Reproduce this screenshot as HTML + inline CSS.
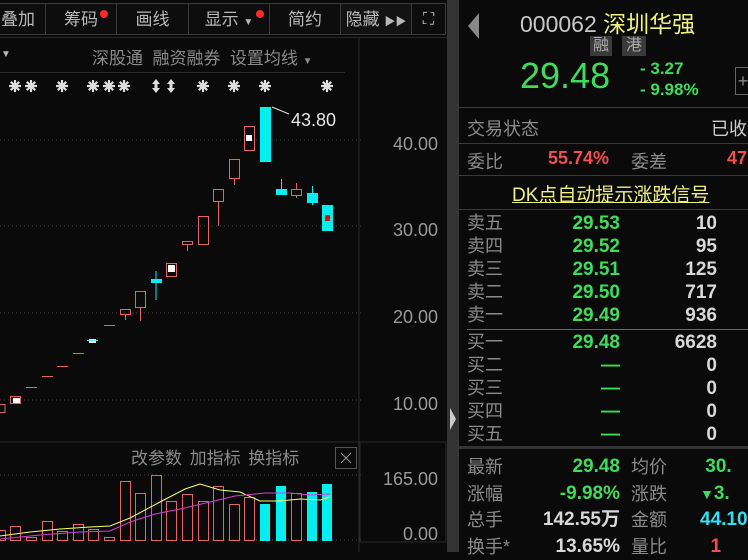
<!DOCTYPE html>
<html><head><meta charset="utf-8"><style>
body{margin:0;width:748px;height:552px;background:#0a0a0a;overflow:hidden;position:relative;font-family:"Liberation Sans","Noto Sans CJK SC",sans-serif;}
.a{position:absolute;white-space:nowrap;}
.tb{position:absolute;top:3px;height:32px;border:1px solid #3a3a3a;background:#0d0d0d;color:#b8b8b8;font-size:17px;line-height:32px;text-align:center;box-sizing:border-box;}
.dot{position:absolute;width:8px;height:8px;border-radius:50%;background:#ff2a2a;}
.hl{position:absolute;left:459px;width:289px;height:1px;background:#3a3a3a;}
.lb{color:#8a8a8a;font-size:18px;}
.g{color:#3ddc5a;font-weight:bold;font-size:19px;}
.w{color:#d8d8d8;font-weight:bold;font-size:19px;}
</style></head><body>
<div class="tb" style="left:-2px;width:48px;text-align:left;padding-left:2px">叠加 <span style="font-size:10px">▼</span></div>
<div class="tb" style="left:45px;width:72px">筹码</div><div class="dot" style="left:100px;top:10px"></div>
<div class="tb" style="left:116px;width:73px">画线</div>
<div class="tb" style="left:188px;width:82px">显示 <span style="font-size:10px">▼</span></div><div class="dot" style="left:256px;top:10px"></div>
<div class="tb" style="left:269px;width:72px">简约</div>
<div class="tb" style="left:340px;width:72px;background:#121212">隐藏 <span style="font-size:11px">▶▶</span></div>
<div class="tb" style="left:411px;width:35px;font-size:16px">⛶</div>
<div class="a" style="left:0;top:37px;width:447px;height:1px;background:#2a2a2a"></div>
<div class="a" style="left:92px;top:44px;color:#8a8a8a;font-size:17px">深股通&nbsp;&nbsp;融资融券&nbsp;&nbsp;设置均线 <span style="font-size:10px">▼</span></div>
<div class="a" style="left:0;top:72px;width:345px;height:1px;background:#2a2a2a"></div>
<svg class="a" style="left:0;top:0" width="459" height="552">
<defs><g id="st" stroke="#ddd" stroke-width="2.2"><line x1="-6" y1="0" x2="6" y2="0"/><line x1="0" y1="-6" x2="0" y2="6"/><line x1="-4.2" y1="-4.2" x2="4.2" y2="4.2"/><line x1="-4.2" y1="4.2" x2="4.2" y2="-4.2"/><circle r="3" fill="#ddd" stroke="none"/></g>
<g id="ar" fill="#ddd"><polygon points="0,-7 -4,-2 4,-2"/><polygon points="0,7 -4,2 4,2"/><rect x="-1.5" y="-3" width="3" height="6"/></g></defs>
<use href="#st" x="15" y="86"/><use href="#st" x="31" y="86"/><use href="#st" x="62" y="86"/><use href="#st" x="93" y="86"/><use href="#st" x="109" y="86"/><use href="#st" x="124" y="86"/>
<use href="#ar" x="156" y="86"/><use href="#ar" x="171" y="86"/><use href="#st" x="203" y="86"/><use href="#st" x="234" y="86"/><use href="#st" x="265" y="86"/><use href="#st" x="327" y="86"/>
<line x1="359" y1="38" x2="359" y2="552" stroke="#2a2a2a"/>
<g stroke="#444" stroke-dasharray="1,3">
<line x1="0" y1="140" x2="362" y2="140"/><line x1="0" y1="226" x2="362" y2="226"/><line x1="0" y1="313" x2="362" y2="313"/><line x1="0" y1="400" x2="362" y2="400"/><line x1="0" y1="475" x2="362" y2="475"/><line x1="0" y1="540" x2="362" y2="540"/>
</g>
<rect x="360" y="442" width="86" height="100" fill="none" stroke="#2a2a2a"/>
<line x1="0" y1="442" x2="360" y2="442" stroke="#2a2a2a"/>
<rect x="447" y="0" width="11" height="552" fill="#333"/>
<polygon points="450,408 456,419 450,430" fill="#ccc"/>
<g fill="none" stroke="#e06666" stroke-width="1">
<rect x="-1" y="404.5" width="6" height="8"/><rect x="10.5" y="396.5" width="10" height="7"/>
<line x1="26" y1="387.5" x2="37" y2="387.5"/><line x1="42" y1="376.5" x2="53" y2="376.5"/><line x1="57" y1="366.5" x2="68" y2="366.5"/><line x1="73" y1="353.5" x2="84" y2="353.5"/><line x1="104" y1="325.5" x2="115" y2="325.5"/>
<rect x="120.5" y="309.5" width="10" height="5"/><line x1="125.5" y1="314" x2="125.5" y2="320"/>
<rect x="135.5" y="291.5" width="10" height="16"/><line x1="140.5" y1="308" x2="140.5" y2="321"/>
<rect x="166.5" y="263.5" width="10" height="13"/>
<rect x="182.5" y="241.5" width="10" height="3"/><line x1="187.5" y1="245" x2="187.5" y2="251"/>
<rect x="198.5" y="216.5" width="10" height="28"/>
<rect x="213.5" y="189.5" width="10" height="12"/><line x1="218.5" y1="202" x2="218.5" y2="226"/>
<rect x="229.5" y="159.5" width="10" height="19"/><line x1="234.5" y1="179" x2="234.5" y2="185"/>
<rect x="244.5" y="126.5" width="10" height="24"/>
<rect x="291.5" y="189.5" width="10" height="6"/><line x1="296.5" y1="183" x2="296.5" y2="189"/><line x1="296.5" y1="196" x2="296.5" y2="198"/>
</g>
<rect x="13" y="398" width="7" height="5" fill="#fff"/><rect x="89" y="339" width="7" height="4" fill="#fff"/><line x1="87" y1="340.5" x2="98" y2="340.5" stroke="#6ee"/>
<rect x="168" y="265" width="7" height="7" fill="#fff"/><rect x="246" y="135" width="6" height="6" fill="#fff"/>
<g fill="#00f0f0"><rect x="151" y="279" width="11" height="4"/><rect x="155.5" y="271" width="1" height="29"/>
<rect x="260" y="107" width="11" height="55"/><rect x="276" y="189" width="11" height="6"/><rect x="281" y="179" width="1" height="10"/>
<rect x="307" y="193" width="11" height="10"/><rect x="312" y="186" width="1" height="19"/><rect x="322" y="205" width="11" height="26"/></g>
<rect x="325" y="215" width="5" height="6" fill="#e00"/>
<line x1="272" y1="107" x2="289" y2="114" stroke="#ddd"/>
<text x="291" y="126" fill="#e6e6e6" font-size="18" font-family="Liberation Sans">43.80</text>
<g fill="#999" font-size="18" font-family="Liberation Sans" text-anchor="end">
<text x="438" y="150">40.00</text><text x="438" y="236">30.00</text><text x="438" y="323">20.00</text><text x="438" y="410">10.00</text><text x="438" y="485">165.00</text><text x="438" y="540">0.00</text></g>
<text x="131" y="464" fill="#8a8a8a" font-size="17" font-family="Noto Sans CJK SC">改参数&#160;&#160;加指标&#160;&#160;换指标</text>
<rect x="335.5" y="447.5" width="21" height="21" fill="none" stroke="#555"/>
<path d="M341 453L351 463M351 453L341 463" stroke="#999"/>
<g fill="none" stroke="#e06666">
<rect x="-2.5" y="530.5" width="8" height="10"/><rect x="10.5" y="526.5" width="10" height="14"/><rect x="26.5" y="537.5" width="10" height="3"/><rect x="42.5" y="521.5" width="10" height="19"/><rect x="57.5" y="531.5" width="10" height="9"/><rect x="73.5" y="524.5" width="10" height="16"/><rect x="88.5" y="529.5" width="10" height="11"/><rect x="104.5" y="537.5" width="10" height="3"/><rect x="120.5" y="481.5" width="10" height="59"/><rect x="135.5" y="493.5" width="10" height="47"/><rect x="151.5" y="475.5" width="10" height="65"/><rect x="166.5" y="501.5" width="10" height="39"/><rect x="182.5" y="494.5" width="10" height="46"/><rect x="198.5" y="501.5" width="10" height="39"/><rect x="213.5" y="486.5" width="10" height="54"/><rect x="229.5" y="504.5" width="10" height="36"/><rect x="244.5" y="497.5" width="10" height="43"/><rect x="291.5" y="493.5" width="10" height="47"/></g>
<g fill="#00f0f0"><rect x="260" y="504" width="10" height="37"/><rect x="276" y="486" width="10" height="55"/><rect x="307" y="492" width="10" height="49"/><rect x="322" y="484" width="10" height="57"/></g>
<polyline fill="none" stroke="#ffff66" points="0,536 30,532 60,529 90,527 110,526 130,518 160,502 185,489 200,484 220,490 240,492 260,501 280,501 300,499 320,500 330,497"/>
<polyline fill="none" stroke="#d040d0" points="0,539 40,535 80,532 110,531 130,522 155,514 180,509 210,502 235,496 265,493 290,493 310,495 330,494"/>
</svg>
<div class="a" style="left:458px;top:0;width:1px;height:552px;background:#3a3a3a"></div>
<svg class="a" style="left:466px;top:12px" width="16" height="28"><polygon points="13,1 13,27 2,14" fill="#888"/></svg>
<div class="a" style="left:520px;top:5px;font-size:23px;color:#c8c8c8">000062 <span style="color:#f0f080;font-family:'Noto Sans CJK SC'">深圳华强</span></div>
<div class="a" style="left:590px;top:36px;width:22px;height:20px;background:#3a3a3a;color:#aaa;font-size:16px;text-align:center;line-height:20px">融</div>
<div class="a" style="left:622px;top:36px;width:24px;height:20px;background:#3a3a3a;color:#aaa;font-size:16px;text-align:center;line-height:20px">港</div>
<div class="a" style="left:520px;top:55px;font-size:36px;color:#3ddc5a">29.48</div>
<div class="a" style="left:640px;top:58px;font-size:17px;color:#3ddc5a;font-weight:bold;line-height:21px">- 3.27<br>- 9.98%</div>
<div class="a" style="left:735px;top:67px;width:14px;height:26px;border:1px solid #666;color:#888;font-size:18px;line-height:26px;text-align:center">+</div>
<div class="hl" style="top:107px"></div>
<div class="a lb" style="left:467px;top:115px">交易状态</div><div class="a" style="left:711px;top:115px;color:#ccc;font-size:18px">已收</div>
<div class="hl" style="top:143px"></div>
<div class="a lb" style="left:467px;top:148px">委比</div><div class="a" style="left:548px;top:148px;color:#f05050;font-weight:bold;font-size:18px">55.74%</div>
<div class="a lb" style="left:631px;top:148px">委差</div><div class="a" style="left:727px;top:148px;color:#f05050;font-weight:bold;font-size:18px">47</div>
<div class="hl" style="top:175px"></div>
<div class="a" style="left:512px;top:180px;color:#f0f080;font-size:19px;text-decoration:underline">DK点自动提示涨跌信号</div>
<div class="hl" style="top:209px"></div>
<div class="a" style="left:467px;top:212px;line-height:23px">
<div class="lb">卖五</div><div class="lb">卖四</div><div class="lb">卖三</div><div class="lb">卖二</div><div class="lb">卖一</div>
<div style="height:4px"></div>
<div class="lb">买一</div><div class="lb">买二</div><div class="lb">买三</div><div class="lb">买四</div><div class="lb">买五</div></div>
<div class="a" style="left:520px;width:100px;top:212px;line-height:23px;text-align:right">
<div class="g">29.53</div><div class="g">29.52</div><div class="g">29.51</div><div class="g">29.50</div><div class="g">29.49</div><div style="height:4px"></div><div class="g">29.48</div><div class="g">—</div><div class="g">—</div><div class="g">—</div><div class="g">—</div></div>
<div class="a" style="left:620px;width:97px;top:212px;line-height:23px;text-align:right">
<div class="w">10</div><div class="w">95</div><div class="w">125</div><div class="w">717</div><div class="w">936</div><div style="height:4px"></div><div class="w">6628</div><div class="w">0</div><div class="w">0</div><div class="w">0</div><div class="w">0</div></div>
<div class="a" style="left:467px;top:329px;width:281px;height:1px;background:#666"></div>
<div class="a" style="left:459px;top:446px;width:289px;height:3px;background:#333"></div>
<div class="a" style="left:467px;top:454px;line-height:26.5px"><div class="lb">最新</div><div class="lb">涨幅</div><div class="lb">总手</div><div class="lb">换手*</div></div>
<div class="a" style="left:520px;width:100px;top:454px;line-height:26.5px;text-align:right"><div class="g">29.48</div><div class="g">-9.98%</div><div class="w">142.55万</div><div class="w">13.65%</div></div>
<div class="a" style="left:631px;top:454px;line-height:26.5px"><div class="lb">均价</div><div class="lb">涨跌</div><div class="lb">金额</div><div class="lb">量比</div></div>
<div class="a" style="left:700px;top:454px;line-height:26.5px"><div class="g">&nbsp;30.</div><div class="g"><span style="font-size:14px">▼</span>3.</div><div class="g" style="color:#30e0f0">44.10</div><div class="g" style="color:#f05050">&nbsp;&nbsp;1</div></div>
</body></html>
